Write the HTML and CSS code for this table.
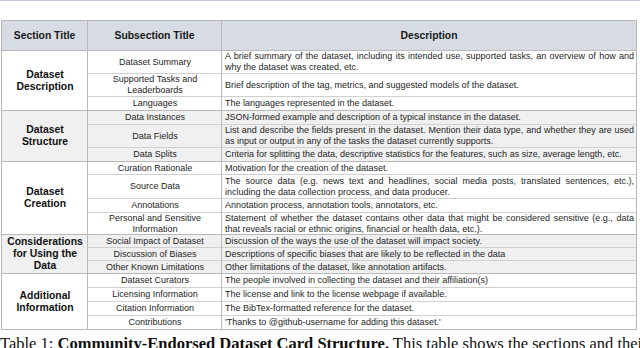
FILE: index.html
```html
<!DOCTYPE html>
<html lang="en">
  <head>
    <meta charset="UTF-8" />
    <title>Dataset Card Structure</title>
    <link rel="stylesheet" href="styles.css">
  </head>
  <body class="body">
    <div class="top__rule"></div>
    <table class="card">
      <colgroup>
        <col class="col-section" />
        <col class="col-sub" />
        <col class="col-desc" />
      </colgroup>
      <thead>
        <tr class="card__head">
          <th>Section Title</th>
          <th>Subsection Title</th>
          <th>Description</th>
        </tr>
      </thead>
      <tbody>
        <tr class="row-2 row-top">
          <td class="section" rowspan="3">Dataset<br />Description</td>
          <td class="sub">Dataset Summary</td>
          <td class="desc">A brief summary of the dataset, including its intended use, supported tasks, an overview of how and why the dataset was created, etc.</td>
        </tr>
        <tr class="row-2 row-tall">
          <td class="sub">Supported Tasks and<br />Leaderboards</td>
          <td class="desc">Brief description of the tag, metrics, and suggested models of the dataset.</td>
        </tr>
        <tr class="row-1 group-end">
          <td class="sub">Languages</td>
          <td class="desc">The languages represented in the dataset.</td>
        </tr>

        <tr class="row-1 shaded">
          <td class="section" rowspan="3">Dataset<br />Structure</td>
          <td class="sub">Data Instances</td>
          <td class="desc">JSON-formed example and description of a typical instance in the dataset.</td>
        </tr>
        <tr class="row-2 shaded">
          <td class="sub">Data Fields</td>
          <td class="desc">List and describe the fields present in the dataset. Mention their data type, and whether they are used as input or output in any of the tasks the dataset currently supports.</td>
        </tr>
        <tr class="row-1 shaded group-end">
          <td class="sub">Data Splits</td>
          <td class="desc">Criteria for splitting the data, descriptive statistics for the features, such as size, average length, etc.</td>
        </tr>

        <tr class="row-1 row-low">
          <td class="section" rowspan="4">Dataset<br />Creation</td>
          <td class="sub">Curation Rationale</td>
          <td class="desc">Motivation for the creation of the dataset.</td>
        </tr>
        <tr class="row-2 row-wide">
          <td class="sub">Source Data</td>
          <td class="desc">The source data (e.g. news text and headlines, social media posts, translated sentences, etc.), including the data collection process, and data producer.</td>
        </tr>
        <tr class="row-1">
          <td class="sub">Annotations</td>
          <td class="desc">Annotation process, annotation tools, annotators, etc.</td>
        </tr>
        <tr class="row-2 row-short group-end">
          <td class="sub">Personal and Sensitive<br />Information</td>
          <td class="desc">Statement of whether the dataset contains other data that might be considered sensitive (e.g., data that reveals racial or ethnic origins, financial or health data, etc.).</td>
        </tr>

        <tr class="row-1 row-low shaded">
          <td class="section" rowspan="3">Considerations<br />for Using the<br />Data</td>
          <td class="sub">Social Impact of Dataset</td>
          <td class="desc">Discussion of the ways the use of the dataset will impact society.</td>
        </tr>
        <tr class="row-1 row-low shaded">
          <td class="sub">Discussion of Biases</td>
          <td class="desc">Descriptions of specific biases that are likely to be reflected in the data</td>
        </tr>
        <tr class="row-1 row-low shaded group-end">
          <td class="sub">Other Known Limitations</td>
          <td class="desc">Other limitations of the dataset, like annotation artifacts.</td>
        </tr>

        <tr class="row-1">
          <td class="section" rowspan="4">Additional<br />Information</td>
          <td class="sub">Dataset Curators</td>
          <td class="desc">The people involved in collecting the dataset and their affiliation(s)</td>
        </tr>
        <tr class="row-1">
          <td class="sub">Licensing Information</td>
          <td class="desc">The license and link to the license webpage if available.</td>
        </tr>
        <tr class="row-1">
          <td class="sub">Citation Information</td>
          <td class="desc">The BibTex-formatted reference for the dataset.</td>
        </tr>
        <tr class="row-1">
          <td class="sub">Contributions</td>
          <td class="desc">'Thanks to @github-username for adding this dataset.'</td>
        </tr>
      </tbody>
    </table>
    <p class="caption">Table 1: <b>Community-Endorsed Dataset Card Structure.</b> This table shows the sections and their</p>
  </body>
</html>
```

FILE: styles.css
```css
.body {
  margin: 0;
  background-color: #ffffff;
  color: #1e1e1e;
  overflow: hidden;
}
.top__rule {
  height: 1px;
  background-color: #c6c7e8;
  margin-bottom: 19px;
}
.card {
  border-collapse: collapse;
  width: 636px;
  margin-left: 1px;
  font-family: "Liberation Sans", Arial, sans-serif;
  font-size: 9px;
  line-height: 11px;
  table-layout: fixed;
  border: 1px solid #b9b9b9;
}
.col-section {
  width: 86px;
}
.col-sub {
  width: 134px;
}
.card__head {
  height: 30px;
  background-color: #d7dce4;
}
.card__head th {
  padding: 0;
  font-size: 10.4px;
  font-weight: bold;
  border: 1px solid #b9b9b9;
  color: #1a1a1a;
}
.card td {
  padding: 0 2px 0 3px;
  border-top: 1px solid #d0d0d0;
  border-left: 1px solid #b9b9b9;
  border-right: 1px solid #b9b9b9;
}
.row-1 {
  height: 14px;
}
.row-2 {
  height: 22px;
}
.row-top {
  height: 20px;
}
.row-tall {
  height: 23px;
}
.row-wide {
  height: 24px;
}
.row-low {
  height: 13px;
}
.row-short {
  height: 19px;
  line-height: 10.5px;
}
.shaded {
  background-color: #f0f0f0;
}
.group-end td {
  border-bottom: 1px solid #b9b9b9;
}
.card .section {
  font-size: 10.4px;
  font-weight: bold;
  line-height: 12px;
  text-align: center;
  border-bottom: 1px solid #b9b9b9;
  color: #111111;
}
.sub {
  text-align: center;
}
.desc {
  text-align: justify;
}
.caption {
  margin: 5px 0 0 0;
  font-family: "Liberation Serif", "Times New Roman", serif;
  font-size: 16.5px;
  line-height: 17px;
  white-space: nowrap;
  color: #111111;
}
```
